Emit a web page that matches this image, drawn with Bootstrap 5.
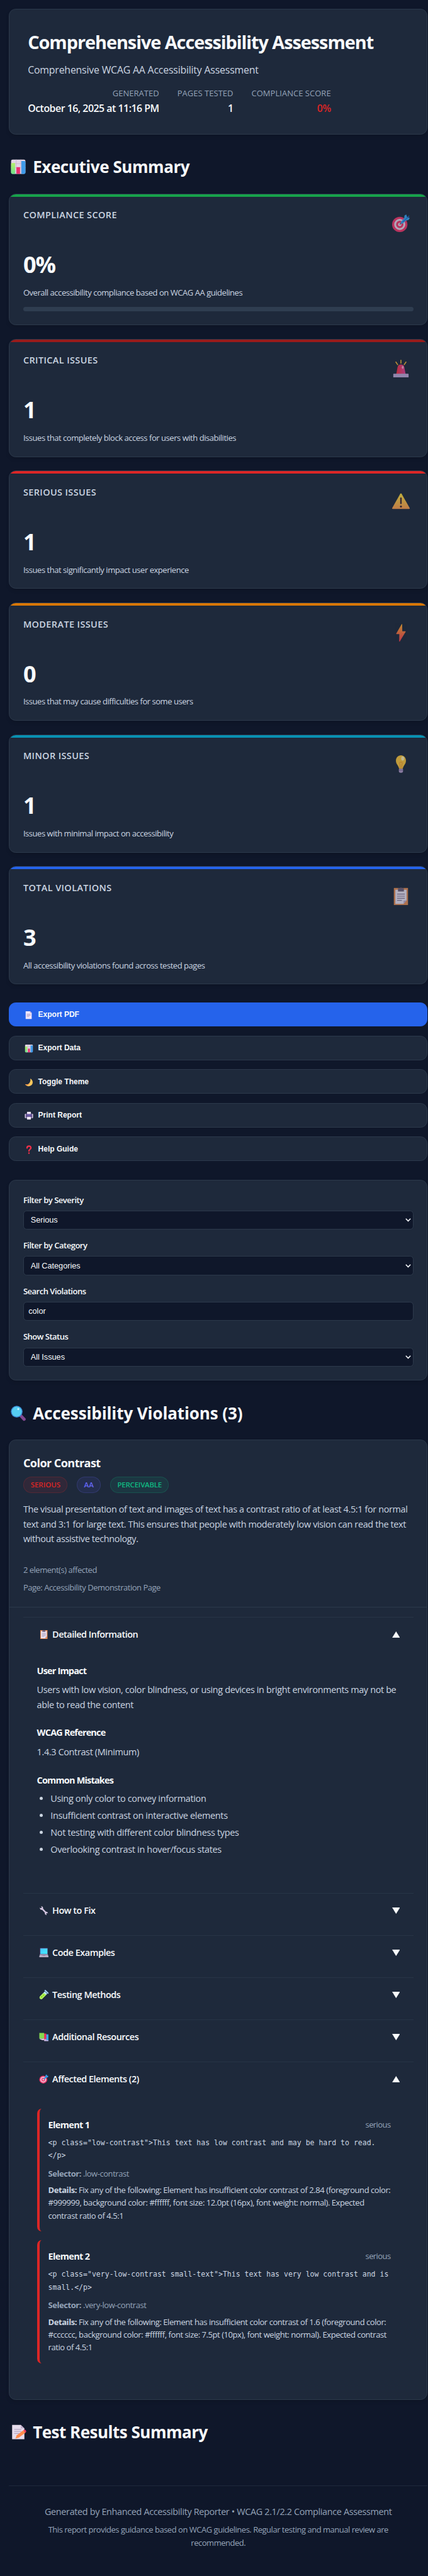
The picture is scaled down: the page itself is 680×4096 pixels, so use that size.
<!DOCTYPE html>
<html lang="en">
<head>
<meta charset="utf-8">
<meta name="viewport" content="width=device-width, initial-scale=1">
<title>Comprehensive Accessibility Assessment</title>
<link href="https://cdn.jsdelivr.net/npm/bootstrap@5.3.0/dist/css/bootstrap.min.css" rel="stylesheet">
<style>
body{background:#0f172a;color:#f8fafc;font-family:"Open Sans","Noto Sans",sans-serif;font-size:14.45px;width:680px;height:4096px;overflow:hidden}
.page{padding:14.4px 0 0 14.4px;width:679.2px}
.panel{background:#1e293b;border:1px solid #2c394b;border-radius:10.8px;box-shadow:0 3px 6px -1px rgba(0,0,0,.16)}
h1,h2,h3,h4,p,ul{margin:0}
.soft{color:#cbd5e1}.dim{color:#94a3b8}
.hero{height:199.4px;padding:32.9px 28.8px 0}
.hero h1{font-size:28.9px;font-weight:700;line-height:38px;letter-spacing:-1.06px}
.hero .sub{font-size:15.9px;line-height:26px;margin-top:11.4px;letter-spacing:-.211px}
.facts{gap:28.9px;margin-top:14.3px}
.facts .k{font-size:13px;line-height:20px;letter-spacing:.03px}
.facts .v{font-size:15.9px;font-weight:600;line-height:26px;margin-top:.8px;letter-spacing:-.493px}
.sect{font-size:26px;font-weight:700;line-height:36px;letter-spacing:-.43px;margin-top:33.4px;margin-bottom:24.5px;padding-left:1.6px}
.sect svg{width:26px;height:26px;margin-right:10.2px}
.stat{height:188px;margin-bottom:21.7px;padding:21.5px 21.5px 0;position:relative;overflow:hidden}
.stat::before{content:"";position:absolute;left:0;right:0;top:0;height:4px;background:var(--tone)}
.stat.tall{height:209.5px;margin-bottom:21.5px}
.stat .top{height:68.1px}
.stat h3{font-size:14.45px;font-weight:600;line-height:24px;letter-spacing:.406px}
.stat .top svg{width:30px;height:30px;margin:10px 4.5px 0 0;opacity:.72}
.stat .num{font-size:36.1px;font-weight:700;line-height:44px;letter-spacing:-1.07px}
.stat .txt{font-size:13px;line-height:20px;margin-top:12.7px;letter-spacing:-.46px}
.track{height:7.2px;border-radius:3.6px;background:#334155;margin-top:12.8px;opacity:.85}
.acts{margin-top:28.7px}
.act{display:flex;align-items:center;height:39.2px;margin-bottom:14.4px;padding:0 0 0 23.2px;border-radius:10.8px;background:#1e293b;border:1px solid #2c394b;color:#f8fafc;font:700 12px/14px "Liberation Sans",Arial,sans-serif;width:100%;text-align:left}
.act.main{height:38.3px;margin-bottom:14.1px;background:#2563eb;border-color:#2563eb}
.act svg{width:14px;height:14px;margin:2px 8px 0 0}
.filters{height:319.8px;margin-top:29.2px;padding:21.1px 21.5px 0}
.filters label{display:block;font-size:13px;font-weight:600;line-height:20px;margin-bottom:7.2px;letter-spacing:-.49px}
.filters .form-select,.filters .form-control{height:30.2px;margin-bottom:15.2px;background-color:#0f172a;border:1px solid #2c394b;border-radius:5.4px;color:#f8fafc;font:12.7px/28px "Liberation Sans",Arial,sans-serif;padding:0 7.3px}
.filters .form-select{padding:0 10.8px;background-image:url("data:image/svg+xml,%3Csvg xmlns='http://www.w3.org/2000/svg' viewBox='0 0 9 6'%3E%3Cpath d='M.8.8l3.7 3.8L8.2.8' fill='none' stroke='%23f8fafc' stroke-width='1.5'/%3E%3C/svg%3E");background-size:9px 6px;background-position:right 2.6px center}
.viol{height:1526.6px}
.vhead{height:266px;padding:22.8px 21.5px 0;border-bottom:1px solid #2c394b}
.vhead h3{font-size:18.06px;font-weight:700;line-height:26px;letter-spacing:-.558px}
.tags{gap:14.4px;margin-top:8.5px}
.pill{height:26.2px;line-height:24.6px;border-radius:13px;padding:0 10.4px 0 10.8px;font-size:11.56px;font-weight:600;border:1px solid}
.p-ser{color:#dc2626;background:rgba(220,38,38,.1);border-color:rgba(220,38,38,.2);letter-spacing:-.06px}
.p-aa{color:#6366f1;background:rgba(99,102,241,.1);border-color:rgba(99,102,241,.2)}
.p-per{color:#10b981;background:rgba(16,185,129,.1);border-color:rgba(16,185,129,.2);letter-spacing:-.25px}
.vhead .desc{line-height:23.55px;margin-top:14.5px;letter-spacing:-.363px}
.vhead .meta{font-size:13px;line-height:20px;letter-spacing:-.49px}
.accs{padding:14.8px 21.5px 0}
.acc{height:67px;border-top:1px solid #273446}
.acc.open{height:439px}
.acc-h{height:53px;padding:0 21.6px 0 25px}
.acc-h b{font-weight:600;letter-spacing:-.481px}
.acc-h .ic{width:15.4px;height:15.4px;margin-right:5.8px}
.acc-h .tri{width:12.6px;height:10.2px}
.acc-b{padding:19.9px 21.7px 0}
.acc-b h4{font-size:14.45px;font-weight:700;line-height:24px;letter-spacing:-.8px}
.acc-b .t{line-height:23.2px;letter-spacing:-.356px;margin:6.4px 0 21.6px}
.acc-b ul{padding-left:21.7px;margin-top:5.9px;letter-spacing:-.316px}
.acc-b li{line-height:23.5px;margin-bottom:3.3px}
.elm{height:195.5px;margin:0 21.7px 14.1px;border-left:4px solid #dc2626;border-radius:7.2px;padding:14.2px 14.4px 0 14px;font-size:13px}
.elm:first-of-type{margin-top:20.6px}
.elm h4{font-size:14.45px;font-weight:700;line-height:24px;letter-spacing:-.62px}
.elm .sev{line-height:22px;letter-spacing:-.57px}
.elm pre{margin:6px 0 0;font:11.53px/20.3px "DejaVu Sans Mono",monospace;white-space:pre-wrap;overflow:visible}
.elm .sel{line-height:20px;margin-top:8.1px;letter-spacing:-.45px}
.elm .det{line-height:20.35px;margin-top:6.4px;letter-spacing:-.44px;margin-right:-5px}
.foot{border-top:1px solid #1e293b;margin-top:67.2px;padding-top:29px}
.foot .a{line-height:24px;letter-spacing:-.361px}
.foot .b{font-size:13px;line-height:20.85px;margin-top:5.2px;letter-spacing:-.483px}
</style>
</head>
<body>
<svg width="0" height="0" class="position-absolute" aria-hidden="true">
<defs>
<linearGradient id="gy" x1="0" y1="0" x2="0" y2="1"><stop offset="0" stop-color="#fce13d"/><stop offset="1" stop-color="#ff9d4d"/></linearGradient>
<linearGradient id="gb" x1="0" y1="0" x2="0" y2="1"><stop offset="0" stop-color="#ffb02e"/><stop offset="1" stop-color="#f8394f"/></linearGradient>
<linearGradient id="gr" x1="0" y1="0" x2="1" y2="0"><stop offset="0" stop-color="#f92f3f"/><stop offset="1" stop-color="#e0449c"/></linearGradient>
<linearGradient id="gl" x1="0" y1="0" x2="1" y2="1"><stop offset="0" stop-color="#4bc4ff"/><stop offset="1" stop-color="#3ff0ff"/></linearGradient>
<linearGradient id="gg" x1="0" y1="0" x2="0" y2="1"><stop offset="0" stop-color="#b6f06c"/><stop offset="1" stop-color="#6fe08a"/></linearGradient>
</defs>
<symbol id="chart" viewBox="0 0 32 32"><rect x="2" y="2" width="28" height="28" rx="3" fill="#e2d5e6"/><path d="M2 10h28M2 18h28M12 2v28M21 2v28" stroke="#c4b2ce" stroke-width="1"/><path d="M4 9h6v21H4a2 2 0 0 1-2-2V11a2 2 0 0 1 2-2z" fill="url(#gg)"/><path d="M12.5 17h7v13h-7z" fill="#ee2f6f"/><path d="M22 5h6a2 2 0 0 1 2 2v21a2 2 0 0 1-2 2h-6z" fill="#3f9bea"/></symbol>
<symbol id="target" viewBox="0 0 32 32"><circle cx="14" cy="18" r="13" fill="#f5386c"/><circle cx="14" cy="18" r="9.4" fill="#ead8ea"/><circle cx="14" cy="18" r="6.2" fill="#f5386c"/><circle cx="14" cy="18" r="2.8" fill="#ead8ea"/><path d="M14 18l7-7" stroke="#6d5a77" stroke-width="1.6"/><path d="M16 13.5l5.5-6L22 3l3-2 1.5 4.5L31 7l-2 3.5-4.5 1L19 16.500c-2 1-4-1-3-3z" fill="#37a6f2"/><path d="M19 14L30 3.500" stroke="#1d6fd0" stroke-width="1.4"/></symbol>
<symbol id="siren" viewBox="0 0 32 32"><path d="M16 2v5M7.500 5l3 4.500M24.500 5l-3 4.500" stroke="#f8ba36" stroke-width="1.700" stroke-linecap="round"/><path d="M8 26l2.200-12a5.900 5.900 0 0 1 11.600 0L24 26z" fill="url(#gr)"/><ellipse cx="19" cy="14" rx="1.500" ry="2.500" fill="#ffa9c8"/><path d="M3 25.500a.8.8 0 0 1 .8-.8h24.400a.8.8 0 0 1 .8.8V31H3z" fill="#bfa9d8"/></symbol>
<symbol id="warn" viewBox="0 0 32 32"><path d="M14.800 4.500a1.400 1.400 0 0 1 2.400 0L30.800 28.500c.4.800 0 1.500-.9 1.500H2.100c-.9 0-1.300-.7-.9-1.500z" fill="url(#gy)"/><path d="M16 12v8.500" stroke="#402a32" stroke-width="2.600" stroke-linecap="round"/><circle cx="16" cy="26" r="1.700" fill="#402a32"/></symbol>
<symbol id="bolt" viewBox="0 0 32 32"><path d="M17.200 1.500L8 17.500a.6.6 0 0 0 .5.900h4.800L13 30.500c0 .7.800.8 1.100.3L24 14.500c.3-.5 0-1-.5-1h-5.200l-.2-11.700c0-.6-.6-.7-.9-.3z" fill="url(#gb)"/></symbol>
<symbol id="bulb" viewBox="0 0 32 32"><path d="M16 1c-5 0-8.500 4-8.500 9 0 6 4.500 8 5.500 14h6c1-6 5.500-8 5.500-14 0-5-3.500-9-8.500-9z" fill="#ffc83d"/><path d="M14.500 24v-7c-4-6 7-6 3 0v7" fill="none" stroke="#f39a2c" stroke-width="1.100"/><ellipse cx="19" cy="6.500" rx="2.500" ry="3.500" fill="#fff0b0"/><path d="M12.500 24h7v4.500c0 3-7 3-7 0z" fill="#b39bc8"/><path d="M12.500 26.500h7" stroke="#7d6699" stroke-width="1"/></symbol>
<symbol id="clip" viewBox="0 0 32 32"><path d="M4 2h24v29H4z" fill="#e58d55"/><path d="M6.500 5h19v18l-5 6h-14z" fill="#ece4f4"/><path d="M25.500 23l-5 6v-5z" fill="#b9a9cc"/><path d="M11 2.500h3.500a1.600 1.600 0 0 1 3 0H21V8H11z" fill="#6e6078"/><path d="M9.500 12.500h13M9.500 16h13M9.500 19.500h13M9.500 23h8" stroke="#897b9a" stroke-width="1.300"/></symbol>
<symbol id="page" viewBox="0 0 32 32"><path d="M4 2h16l6 6v22H4z" fill="#f1e6fa"/><path d="M20 2l6 6h-6z" fill="#b9a3d4"/><path d="M8 13h14M8 17h14M8 21h9" stroke="#a793bf" stroke-width="2"/></symbol>
<symbol id="moon" viewBox="0 0 32 32"><path d="M21 2c11 6 11 19 3 25-7 5-17 4-22-4 7 2 13 0 16-5 3-5 4-10 3-16z" fill="#fdc75c"/><path d="M2 23c7 2 13 0 16-5 1 5-5 9-10 10-2-1-4-2-6-5z" fill="#f59a4b"/></symbol>
<symbol id="printer" viewBox="0 0 32 32"><rect x="1" y="9" width="30" height="16" rx="3" fill="#cbbfda"/><rect x="5" y="8" width="22" height="16" fill="#5a4a86"/><rect x="9" y="2" width="14" height="8" fill="#eee6f8"/><rect x="9" y="20" width="14" height="10" fill="#eee6f8"/><path d="M9 14h14" stroke="#7e6bd0" stroke-width="3"/></symbol>
<symbol id="quest" viewBox="0 0 32 32"><path d="M9 10c0-9 15-9 14 0-.5 5-7 5-7 11" fill="none" stroke="#f5304a" stroke-width="5" stroke-linecap="round"/><circle cx="16" cy="28.500" r="2.800" fill="#f5304a"/></symbol>
<symbol id="lens" viewBox="0 0 32 32"><path d="M19 19l8.500 9" stroke="#81488f" stroke-width="6" stroke-linecap="round"/><circle cx="13" cy="13" r="11.500" fill="#3a83cf"/><circle cx="13" cy="13" r="9.800" fill="#55cdf2"/><ellipse cx="16" cy="8" rx="1.800" ry="2.200" fill="#c6f1fc"/></symbol>
<symbol id="wrench" viewBox="0 0 32 32"><path d="M8 8l16 17" stroke="#d6c8e2" stroke-width="5"/><path d="M2.500 7c0 6 4 8 8 6.500L13.500 9C14 5 11 1.500 6.500 2l3 3.500-3 3.500zM29.500 26c0-5-4-7-7.500-5.500L19 24.500c-.5 4 3 7 7 6.500l-2.500-3.500 2.500-3z" fill="#d6c8e2"/></symbol>
<symbol id="laptop" viewBox="0 0 32 32"><rect x="3" y="1" width="26" height="21" rx="1" fill="#59508a"/><rect x="4.500" y="2.500" width="23" height="18" fill="url(#gl)"/><path d="M3 22h26l2 6H1z" fill="#b5a9c4"/><path d="M1 28h30v3H1z" fill="#d9cfe3"/><path d="M11 26h10" stroke="#8d7fa2" stroke-width="2"/></symbol>
<symbol id="tube" viewBox="0 0 32 32"><path d="M19 5l8 8L11 29c-5 5-12-1-8-7z" fill="#b9e7fb"/><path d="M14.500 10.500L24 16 11 29c-5 5-12-1-8-7z" fill="#aef04c"/><path d="M19 1l12 11" stroke="#9ecdf5" stroke-width="4.500"/><circle cx="9" cy="23" r="2" fill="#6cc52d"/><circle cx="15" cy="18" r="1.700" fill="#6cc52d"/></symbol>
<symbol id="books" viewBox="0 0 32 32"><path d="M19 8h12v20H19z" fill="#35a7ec"/><path d="M17 27h14v3H17z" fill="#cbb9e6"/><path d="M13 5h11v19H13z" fill="#ea2a5c"/><path d="M8 24h16v3H8z" fill="#d7a4c8"/><path d="M1 3h16v19H1z" fill="#84d94f"/><path d="M2 22h15v3H4z" fill="#d9c9e2"/></symbol>
<symbol id="memo" viewBox="0 0 32 32"><path d="M4 2h17l7 7v21H4z" fill="#e6dcec"/><path d="M21 2l7 7h-7z" fill="#bfadca"/><path d="M8 11h14M8 15h14M8 19h10" stroke="#b5a5c2" stroke-width="1.400"/><path d="M13 22.500L26 12.500l4 5L17 27l-6.500 2z" fill="#ff8b4d"/><path d="M26 12.500l1.500-1c2-1 5 2.500 3.800 4.500L30 17.500z" fill="#f2395f"/></symbol>
<symbol id="up" viewBox="0 0 12.600 10.200"><path d="M6.300 0l6.300 10.200H0z" fill="#f8fafc"/></symbol>
<symbol id="down" viewBox="0 0 12.600 10.200"><path d="M6.300 10.200L0 0h12.600z" fill="#f8fafc"/></symbol>
</svg>

<main class="page">
  <header class="panel hero">
    <h1>Comprehensive Accessibility Assessment</h1>
    <p class="sub soft">Comprehensive WCAG AA Accessibility Assessment</p>
    <div class="facts d-flex text-end">
      <div><div class="k dim">GENERATED</div><div class="v">October 16, 2025 at 11:16 PM</div></div>
      <div><div class="k dim">PAGES TESTED</div><div class="v">1</div></div>
      <div><div class="k dim">COMPLIANCE SCORE</div><div class="v" style="color:#dc2626">0%</div></div>
    </div>
  </header>

  <h2 class="sect d-flex align-items-center"><svg><use href="#chart"/></svg>Executive Summary</h2>

  <section class="panel stat tall" style="--tone:#16a34a">
    <div class="top d-flex justify-content-between align-items-start"><h3 class="soft">COMPLIANCE SCORE</h3><svg><use href="#target"/></svg></div>
    <div class="num">0%</div><p class="txt soft">Overall accessibility compliance based on WCAG AA guidelines</p>
    <div class="track"></div>
  </section>
  <section class="panel stat" style="--tone:#991b1b">
    <div class="top d-flex justify-content-between align-items-start"><h3 class="soft">CRITICAL ISSUES</h3><svg><use href="#siren"/></svg></div>
    <div class="num">1</div><p class="txt soft">Issues that completely block access for users with disabilities</p>
  </section>
  <section class="panel stat" style="--tone:#dc2626">
    <div class="top d-flex justify-content-between align-items-start"><h3 class="soft">SERIOUS ISSUES</h3><svg><use href="#warn"/></svg></div>
    <div class="num">1</div><p class="txt soft">Issues that significantly impact user experience</p>
  </section>
  <section class="panel stat" style="--tone:#d97706">
    <div class="top d-flex justify-content-between align-items-start"><h3 class="soft">MODERATE ISSUES</h3><svg><use href="#bolt"/></svg></div>
    <div class="num">0</div><p class="txt soft">Issues that may cause difficulties for some users</p>
  </section>
  <section class="panel stat" style="--tone:#0891b2">
    <div class="top d-flex justify-content-between align-items-start"><h3 class="soft">MINOR ISSUES</h3><svg><use href="#bulb"/></svg></div>
    <div class="num">1</div><p class="txt soft">Issues with minimal impact on accessibility</p>
  </section>
  <section class="panel stat mb-0" style="--tone:#2563eb">
    <div class="top d-flex justify-content-between align-items-start"><h3 class="soft">TOTAL VIOLATIONS</h3><svg><use href="#clip"/></svg></div>
    <div class="num">3</div><p class="txt soft">All accessibility violations found across tested pages</p>
  </section>

  <div class="acts">
    <button class="act main"><svg><use href="#page"/></svg>Export PDF</button>
    <button class="act"><svg><use href="#chart"/></svg>Export Data</button>
    <button class="act"><svg><use href="#moon"/></svg>Toggle Theme</button>
    <button class="act"><svg><use href="#printer"/></svg>Print Report</button>
    <button class="act mb-0"><svg><use href="#quest"/></svg>Help Guide</button>
  </div>

  <section class="panel filters">
    <label for="f1">Filter by Severity</label><select id="f1" class="form-select"><option>Serious</option></select>
    <label for="f2">Filter by Category</label><select id="f2" class="form-select"><option>All Categories</option></select>
    <label for="f3">Search Violations</label><input id="f3" class="form-control" value="color">
    <label for="f4">Show Status</label><select id="f4" class="form-select"><option>All Issues</option></select>
  </section>

  <h2 class="sect d-flex align-items-center" style="letter-spacing:-.095px"><svg><use href="#lens"/></svg>Accessibility Violations (3)</h2>

  <article class="panel viol">
    <div class="vhead">
      <h3>Color Contrast</h3>
      <div class="tags d-flex"><span class="pill p-ser">SERIOUS</span><span class="pill p-aa">AA</span><span class="pill p-per">PERCEIVABLE</span></div>
      <p class="desc soft">The visual presentation of text and images of text has a contrast ratio of at least 4.5:1 for normal<br>text and 3:1 for large text. This ensures that people with moderately low vision can read the text<br>without assistive technology.</p>
      <p class="meta dim" style="margin-top:27.2px">2 element(s) affected</p>
      <p class="meta dim" style="margin-top:8.1px">Page: Accessibility Demonstration Page</p>
    </div>
    <div class="accs">
      <div class="acc open">
        <div class="acc-h d-flex align-items-center"><svg class="ic"><use href="#clip"/></svg><b>Detailed Information</b><svg class="tri ms-auto"><use href="#up"/></svg></div>
        <div class="acc-b">
          <h4>User Impact</h4>
          <p class="t soft">Users with low vision, color blindness, or using devices in bright environments may not be<br>able to read the content</p>
          <h4>WCAG Reference</h4>
          <p class="t soft">1.4.3 Contrast (Minimum)</p>
          <h4>Common Mistakes</h4>
          <ul class="soft"><li>Using only color to convey information</li><li>Insufficient contrast on interactive elements</li><li>Not testing with different color blindness types</li><li>Overlooking contrast in hover/focus states</li></ul>
        </div>
      </div>
      <div class="acc"><div class="acc-h d-flex align-items-center"><svg class="ic"><use href="#wrench"/></svg><b>How to Fix</b><svg class="tri ms-auto"><use href="#down"/></svg></div></div>
      <div class="acc"><div class="acc-h d-flex align-items-center"><svg class="ic"><use href="#laptop"/></svg><b>Code Examples</b><svg class="tri ms-auto"><use href="#down"/></svg></div></div>
      <div class="acc"><div class="acc-h d-flex align-items-center"><svg class="ic"><use href="#tube"/></svg><b>Testing Methods</b><svg class="tri ms-auto"><use href="#down"/></svg></div></div>
      <div class="acc"><div class="acc-h d-flex align-items-center"><svg class="ic"><use href="#books"/></svg><b>Additional Resources</b><svg class="tri ms-auto"><use href="#down"/></svg></div></div>
      <div class="acc">
        <div class="acc-h d-flex align-items-center"><svg class="ic"><use href="#target"/></svg><b>Affected Elements (2)</b><svg class="tri ms-auto"><use href="#up"/></svg></div>
        <section class="elm">
          <div class="d-flex justify-content-between"><h4>Element 1</h4><span class="sev dim">serious</span></div>
          <pre class="soft">&lt;p class="low-contrast"&gt;This text has low contrast and may be hard to read.
&lt;/p&gt;</pre>
          <p class="sel dim"><b>Selector:</b> .low-contrast</p>
          <p class="det soft"><b>Details:</b> Fix any of the following: Element has insufficient color contrast of 2.84 (foreground color:<br>#999999, background color: #ffffff, font size: 12.0pt (16px), font weight: normal). Expected<br>contrast ratio of 4.5:1</p>
        </section>
        <section class="elm">
          <div class="d-flex justify-content-between"><h4>Element 2</h4><span class="sev dim">serious</span></div>
          <pre class="soft">&lt;p class="very-low-contrast small-text"&gt;This text has very low contrast and is
small.&lt;/p&gt;</pre>
          <p class="sel dim"><b>Selector:</b> .very-low-contrast</p>
          <p class="det soft"><b>Details:</b> Fix any of the following: Element has insufficient color contrast of 1.6 (foreground color:<br>#cccccc, background color: #ffffff, font size: 7.5pt (10px), font weight: normal). Expected contrast<br>ratio of 4.5:1</p>
        </section>
      </div>
    </div>
  </article>

  <h2 class="sect d-flex align-items-center mb-0" style="letter-spacing:-.5px"><svg><use href="#memo"/></svg>Test Results Summary</h2>

  <footer class="foot text-center dim">
    <p class="a">Generated by Enhanced Accessibility Reporter • WCAG 2.1/2.2 Compliance Assessment</p>
    <p class="b">This report provides guidance based on WCAG guidelines. Regular testing and manual review are<br>recommended.</p>
  </footer>
</main>
<script src="https://cdn.jsdelivr.net/npm/bootstrap@5.3.0/dist/js/bootstrap.bundle.min.js"></script>
</body>
</html>
